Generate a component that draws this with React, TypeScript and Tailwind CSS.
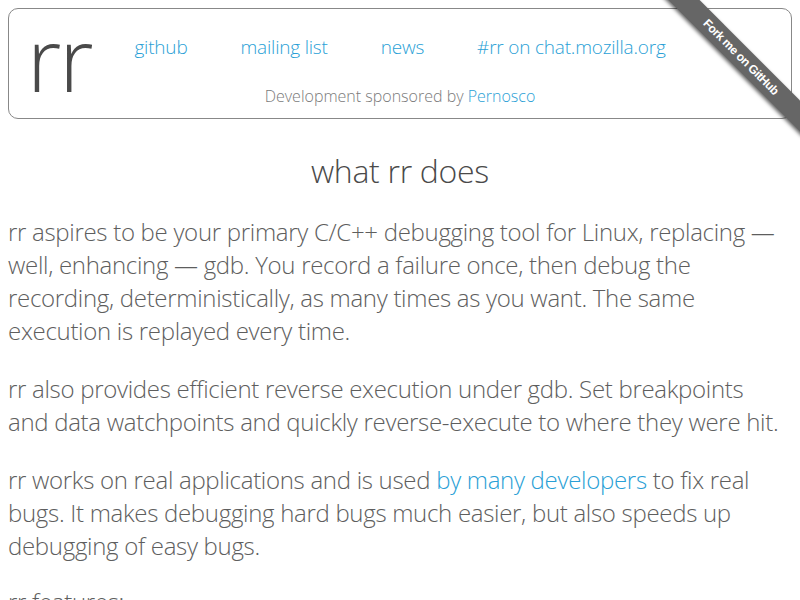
const links = ["github", "mailing list", "news", "#rr on chat.mozilla.org"];

function Ribbon() {
  return (
    <div className="absolute top-0 right-0 w-[150px] h-[150px] overflow-hidden pointer-events-none">
      <a
        href="#"
        className="absolute left-[-9px] top-[46px] w-[200px] h-[22px] rotate-45 bg-[#666666] text-white text-[12px] font-bold leading-[22px] text-center tracking-[-0.4px] shadow-[0_2px_4px_rgba(0,0,0,0.6)] font-['Liberation_Sans',sans-serif]"
      >
        Fork me on GitHub
      </a>
    </div>
  );
}

function Header() {
  return (
    <div className="grid grid-cols-[1fr_auto_1fr] border border-[#888888] rounded-[10px] h-[111px]">
      <div className="pl-[18px] text-[88px] leading-none text-[#4a4a4a] pt-[5px] tracking-[-2px]">rr</div>
      <div className="flex flex-col items-center pt-[24px]">
        <div className="flex gap-[53px] text-[19px] text-[#2a9fd6] tracking-[-0.2px]">
          {links.map((l) => (
            <a key={l} href="#">
              {l}
            </a>
          ))}
        </div>
        <div className="mt-[22px] text-[16px] text-[#7a7a7a]">
          Development sponsored by <a href="#" className="text-[#2a9fd6]">Pernosco</a>
        </div>
      </div>
      <div />
    </div>
  );
}

export default function App() {
  return (
    <div className="relative min-h-[600px] bg-white p-2 font-['Open_Sans',sans-serif] font-light">
      <Ribbon />
      <Header />
      <h2 className="mt-[34px] mb-[27px] text-center text-[32px] leading-[35px] text-[#4a4a4a] font-light tracking-[-0.3px]">
        what rr does
      </h2>
      <div className="text-[24px] leading-[33px] text-[#5e5e5e] tracking-[-0.3px]">
        <p className="mb-[25px]">
          rr aspires to be your primary C/C++ debugging tool for Linux, replacing — well, enhancing — gdb. You
          record a failure once, then debug the recording, deterministically, as many times as you want. The same
          execution is replayed every time.
        </p>
        <p className="mb-[25px]">
          rr also provides efficient reverse execution under gdb. Set breakpoints and{"\u00a0"}data watchpoints and
          quickly reverse-execute to where they were hit.
        </p>
        <p className="mb-[23px]">
          rr works on real applications and is used{" "}
          <a href="#" className="text-[#2a9fd6]">
            by many developers
          </a>{" "}
          to fix real bugs. It makes debugging hard bugs much easier, but also speeds up debugging of easy bugs.
        </p>
        <p className="mb-[25px]">rr features:</p>
      </div>
    </div>
  );
}
